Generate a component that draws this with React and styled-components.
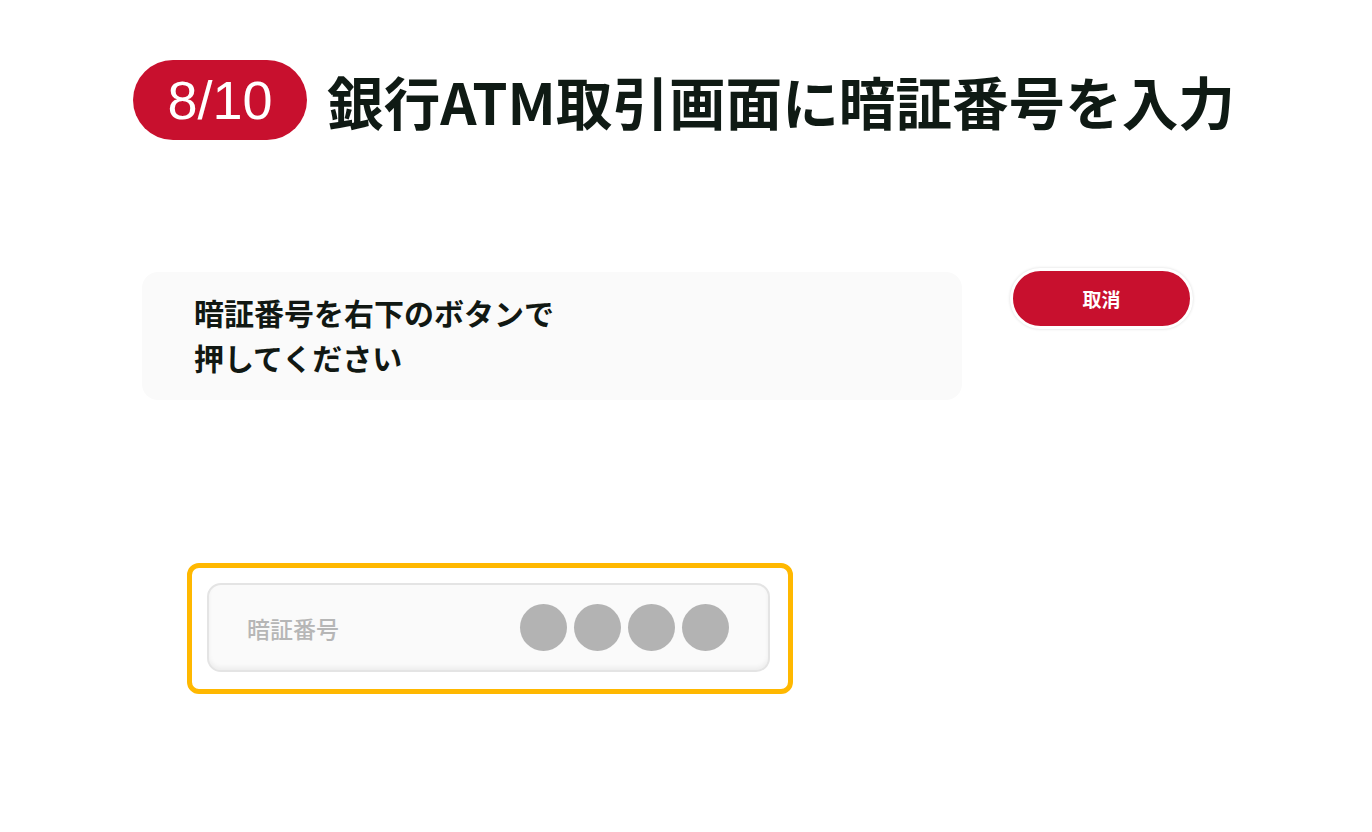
import React from 'react'
import styled, { createGlobalStyle } from 'styled-components'

const GlobalStyle = createGlobalStyle`
    body {
        margin: 0;
        background: #ffffff;
        font-family: "Noto Sans CJK JP", "Noto Sans", sans-serif;
    }
`

const Page = styled.div`
    width: 1372px;
    height: 832px;
    padding-top: 60px;
    box-sizing: border-box;
    background: #ffffff;
`

const Header = styled.header`
    display: flex;
    justify-content: center;
    align-items: center;
    gap: 20px;
    height: 80px;
    padding-right: 4px;
`

const StepBadge = styled.div`
    display: flex;
    align-items: center;
    justify-content: center;
    width: 174px;
    height: 80px;
    border-radius: 40px;
    background: #c8102e;
    color: #ffffff;
    font-family: "Liberation Sans", Arial, sans-serif;
    font-size: 54px;
    line-height: 1;
`

const Title = styled.h1`
    margin: 0;
    font-size: 56.6px;
    font-weight: 700;
    color: #0f1a14;
    line-height: 80px;
    white-space: nowrap;
`

const Screen = styled.main`
    padding-left: 142px;
`

const TopRow = styled.div`
    display: flex;
    align-items: flex-start;
    gap: 48px;
    margin-top: 128px;
`

const Message = styled.div`
    width: 820px;
    height: 128px;
    margin-top: 4px;
    padding: 18px 52px 0;
    box-sizing: border-box;
    border-radius: 16px;
    background: #fafafa;
    color: #111813;
    font-size: 30px;
    font-weight: 700;
    line-height: 45px;
`

const CancelButton = styled.button`
    width: 183px;
    height: 61px;
    border: 3px solid #ffffff;
    border-radius: 31px;
    background: #c8102e;
    box-shadow: 0 0 3px rgba(0, 0, 0, 0.15);
    color: #ffffff;
    font-family: "Noto Sans CJK JP", sans-serif;
    font-size: 19px;
    font-weight: 700;
    cursor: pointer;
`

const Highlight = styled.div`
    width: 606px;
    height: 131px;
    margin: 163px 0 0 45px;
    padding: 15px 18px 17px 15px;
    box-sizing: border-box;
    border: 5px solid #ffb800;
    border-radius: 12px;
`

const PinField = styled.div`
    display: flex;
    align-items: center;
    justify-content: space-between;
    height: 89px;
    padding: 0 39px 0 38px;
    box-sizing: border-box;
    border: 2px solid #e4e4e4;
    border-radius: 14px;
    background: #fafafa;
    box-shadow: inset 0 -3px 4px rgba(0, 0, 0, 0.05);
`

const PinLabel = styled.span`
    font-size: 23px;
    font-weight: 500;
    color: #b6b6b6;
`

const Dots = styled.div`
    display: flex;
    gap: 7px;
`

const Dot = styled.span`
    width: 47px;
    height: 47px;
    border-radius: 50%;
    background: ${p => p.filled ? '#b3b3b3' : '#e6e6e6'};
`

export default function App() {
  return (
    <Page>
        <GlobalStyle />
        <Header>
            <StepBadge>8/10</StepBadge>
            <Title>銀行ATM取引画面に暗証番号を入力</Title>
        </Header>
        <Screen>
            <TopRow>
                <Message>
                    暗証番号を右下のボタンで<br />
                    押してください
                </Message>
                <CancelButton>取消</CancelButton>
            </TopRow>
            <Highlight>
                <PinField>
                    <PinLabel>暗証番号</PinLabel>
                    <Dots>
                        {[0, 1, 2, 3].map(i => <Dot key={i} filled />)}
                    </Dots>
                </PinField>
            </Highlight>
        </Screen>
    </Page>
  )
}
